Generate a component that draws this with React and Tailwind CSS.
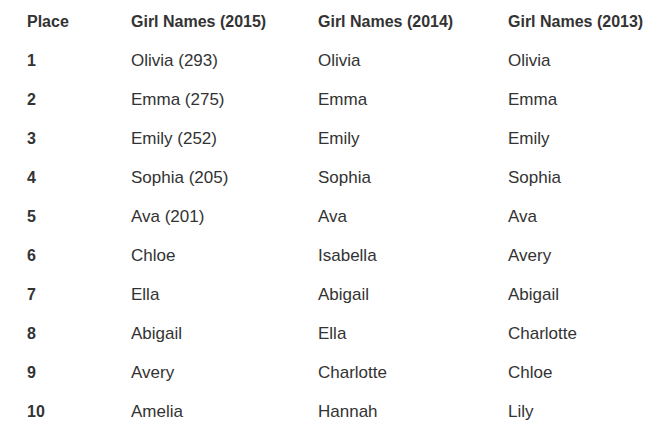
import React from 'react';

const rows = [
  ['1', 'Olivia (293)', 'Olivia', 'Olivia'],
  ['2', 'Emma (275)', 'Emma', 'Emma'],
  ['3', 'Emily (252)', 'Emily', 'Emily'],
  ['4', 'Sophia (205)', 'Sophia', 'Sophia'],
  ['5', 'Ava (201)', 'Ava', 'Ava'],
  ['6', 'Chloe', 'Isabella', 'Avery'],
  ['7', 'Ella', 'Abigail', 'Abigail'],
  ['8', 'Abigail', 'Ella', 'Charlotte'],
  ['9', 'Avery', 'Charlotte', 'Chloe'],
  ['10', 'Amelia', 'Hannah', 'Lily'],
];

export default function App() {
  return (
    <div className="w-[665px] h-[438px] bg-white text-[#333333] font-['Liberation_Sans',Arial,sans-serif] pl-[27px] pt-[2px]">
      <div className="grid grid-cols-[104px_187px_190px_1fr] h-[39px] items-center text-[16px] font-bold">
        <div>Place</div>
        <div>Girl Names (2015)</div>
        <div>Girl Names (2014)</div>
        <div>Girl Names (2013)</div>
      </div>
      {rows.map((r) => (
        <div key={r[0]} className="grid grid-cols-[104px_187px_190px_1fr] h-[39px] items-center text-[17px]">
          <div className="font-bold text-[16px]">{r[0]}</div>
          <div>{r[1]}</div>
          <div>{r[2]}</div>
          <div>{r[3]}</div>
        </div>
      ))}
    </div>
  );
}
